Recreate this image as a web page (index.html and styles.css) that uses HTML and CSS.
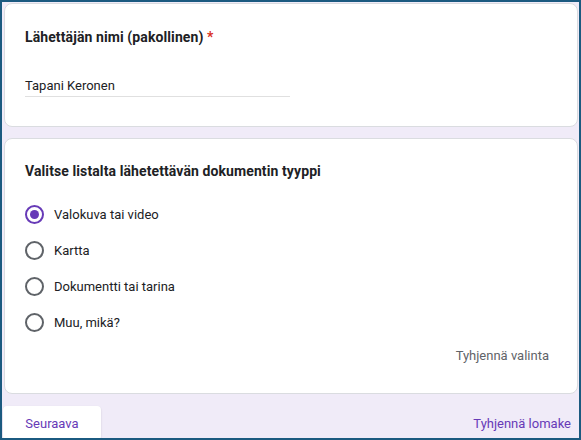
FILE: index.html
```html
<!DOCTYPE html>
<html lang="fi">

<head>
    <meta charset="UTF-8">
    <title>Lomake</title>
    <link rel="stylesheet" href="styles.css">
</head>

<body>
    <div class="frame">
        <div class="card name-card">
            <div class="question-title">Lähettäjän nimi (pakollinen) <span class="required">*</span></div>
            <div class="text-answer">Tapani Keronen</div>
        </div>

        <div class="card type-card">
            <div class="question-title">Valitse listalta lähetettävän dokumentin tyyppi</div>
            <div class="options">
                <label class="option">
                    <span class="radio checked"></span>
                    <span class="option-label">Valokuva tai video</span>
                </label>
                <label class="option">
                    <span class="radio"></span>
                    <span class="option-label">Kartta</span>
                </label>
                <label class="option">
                    <span class="radio"></span>
                    <span class="option-label">Dokumentti tai tarina</span>
                </label>
                <label class="option">
                    <span class="radio"></span>
                    <span class="option-label">Muu, mikä?</span>
                </label>
            </div>
            <div class="clear-choice">Tyhjennä valinta</div>
        </div>

        <div class="footer">
            <button class="next-btn">Seuraava</button>
            <span class="clear-form">Tyhjennä lomake</span>
        </div>
    </div>
</body>

</html>
```

FILE: styles.css
```css
body {
    margin: 0;
    font-family: Roboto, Arial, sans-serif;
    color: #202124;
}

.frame {
    box-sizing: border-box;
    width: 581px;
    height: 440px;
    border: 2px solid #1b5a80;
    background-color: #f0ebf8;
    overflow: hidden;
    padding: 1px 1px 0 2px;
}

.card {
    background-color: #fff;
    border: 1px solid #dadce0;
    border-radius: 8px;
    box-sizing: border-box;
    padding: 0 20px;
}

.name-card {
    height: 124px;
    padding-top: 23px;
}

.type-card {
    height: 256px;
    margin-top: 11px;
    padding-top: 22px;
}

.question-title {
    font-size: 14px;
    font-weight: 700;
    line-height: 20px;
    letter-spacing: 0.1px;
}

.required {
    color: #d93025;
}

.text-answer {
    width: 265px;
    margin-top: 29px;
    font-size: 13px;
    line-height: 20px;
    padding-bottom: 0;
    border-bottom: 1px solid #e0e0e0;
}

.options {
    margin-top: 15px;
}

.option {
    display: flex;
    align-items: center;
    height: 36px;
}

.radio {
    box-sizing: border-box;
    width: 19px;
    height: 19px;
    border: 2px solid #5f6368;
    border-radius: 50%;
    margin-right: 10px;
    display: flex;
    align-items: center;
    justify-content: center;
}

.radio.checked {
    border-color: #673ab7;
}

.radio.checked::after {
    content: "";
    width: 9px;
    height: 9px;
    border-radius: 50%;
    background-color: #673ab7;
}

.option-label {
    font-size: 13px;
}

.clear-choice {
    text-align: right;
    font-size: 13px;
    color: #5f6368;
    margin-top: 8px;
    padding-right: 8px;
}

.footer {
    display: flex;
    justify-content: space-between;
    align-items: center;
    margin-top: 12px;
}

.next-btn {
    width: 98px;
    height: 34px;
    margin-left: -1px;
    background-color: #fff;
    border: none;
    border-radius: 4px;
    color: #673ab7;
    font-family: Roboto, Arial, sans-serif;
    font-size: 13px;
    box-shadow: 0 1px 2px rgba(0, 0, 0, 0.15);
}

.clear-form {
    color: #673ab7;
    font-size: 13px;
    margin-right: 7px;
}
```
